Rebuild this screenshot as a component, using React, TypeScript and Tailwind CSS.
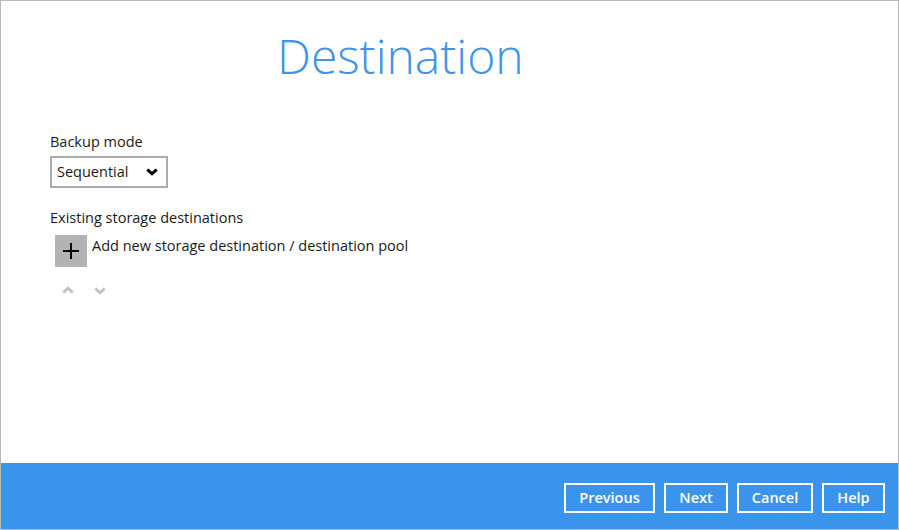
import React from "react";

function ChevronDown({ className }: { className?: string }) {
  return (
    <svg viewBox="0 0 12 8" className={className} fill="currentColor">
      <path d="M0.2 2.6 L2.4 0.4 L6 3.8 L9.6 0.4 L11.8 2.6 L6 7.8 Z" />
    </svg>
  );
}

function ChevronUp({ className }: { className?: string }) {
  return (
    <svg viewBox="0 0 12 8" className={className} fill="currentColor">
      <path d="M0.2 5.4 L2.4 7.6 L6 4.2 L9.6 7.6 L11.8 5.4 L6 0.2 Z" />
    </svg>
  );
}

const buttons = [
  { label: "Previous", w: "w-[91px]" },
  { label: "Next", w: "w-[64px]" },
  { label: "Cancel", w: "w-[76px]" },
  { label: "Help", w: "w-[63px]" },
];

export default function App() {
  return (
    <div
      className="w-[899px] h-[530px] flex flex-col border border-[#b9b9b9] bg-white text-[#1a1a1a]"
      style={{ fontFamily: '"Open Sans", "Noto Sans", sans-serif' }}
    >
      <main className="flex-1">
        <h1 className="pt-[31px] pl-[276px] text-[48px] leading-none font-light text-[#3c95ea]">
          Destination
        </h1>

        <div className="pl-[49px] mt-[52px]">
          <p className="text-[14.5px] leading-[20px]">Backup mode</p>
          <div className="mt-[4px] w-[118px] h-[32px] border-2 border-[#ababab] flex items-center justify-between pl-[5px] pr-[8px]">
            <span className="text-[14.5px] leading-[20px]">Sequential</span>
            <ChevronDown className="w-[12px] h-[8px] text-black" />
          </div>

          <p className="mt-[20px] text-[14.5px] leading-[20px]">Existing storage destinations</p>
          <div className="mt-[7px] ml-[5px] flex items-start gap-[5px]">
            <button className="w-[32px] h-[32px] bg-[#b3b3b3] flex items-center justify-center">
              <svg viewBox="0 0 18 18" className="w-[18px] h-[18px]">
                <path d="M9 1 V17 M1 9 H17" stroke="#000" strokeWidth="2" />
              </svg>
            </button>
            <span className="mt-[1px] text-[14.5px] leading-[20px]">
              Add new storage destination / destination pool
            </span>
          </div>
          <div className="mt-[18px] ml-[12px] flex items-center gap-[20px] text-[#c2c2c2]">
            <ChevronUp className="w-[12px] h-[8px]" />
            <ChevronDown className="w-[12px] h-[8px] mt-[2px]" />
          </div>
        </div>
      </main>

      <footer className="h-[66px] bg-[#3b94ec] flex justify-end items-start pt-[20px] pr-[13px] gap-[9px]">
        {buttons.map((b) => (
          <button
            key={b.label}
            className={`${b.w} h-[30px] border-2 border-white text-white text-[14.5px] font-semibold leading-none`}
          >
            {b.label}
          </button>
        ))}
      </footer>
    </div>
  );
}
